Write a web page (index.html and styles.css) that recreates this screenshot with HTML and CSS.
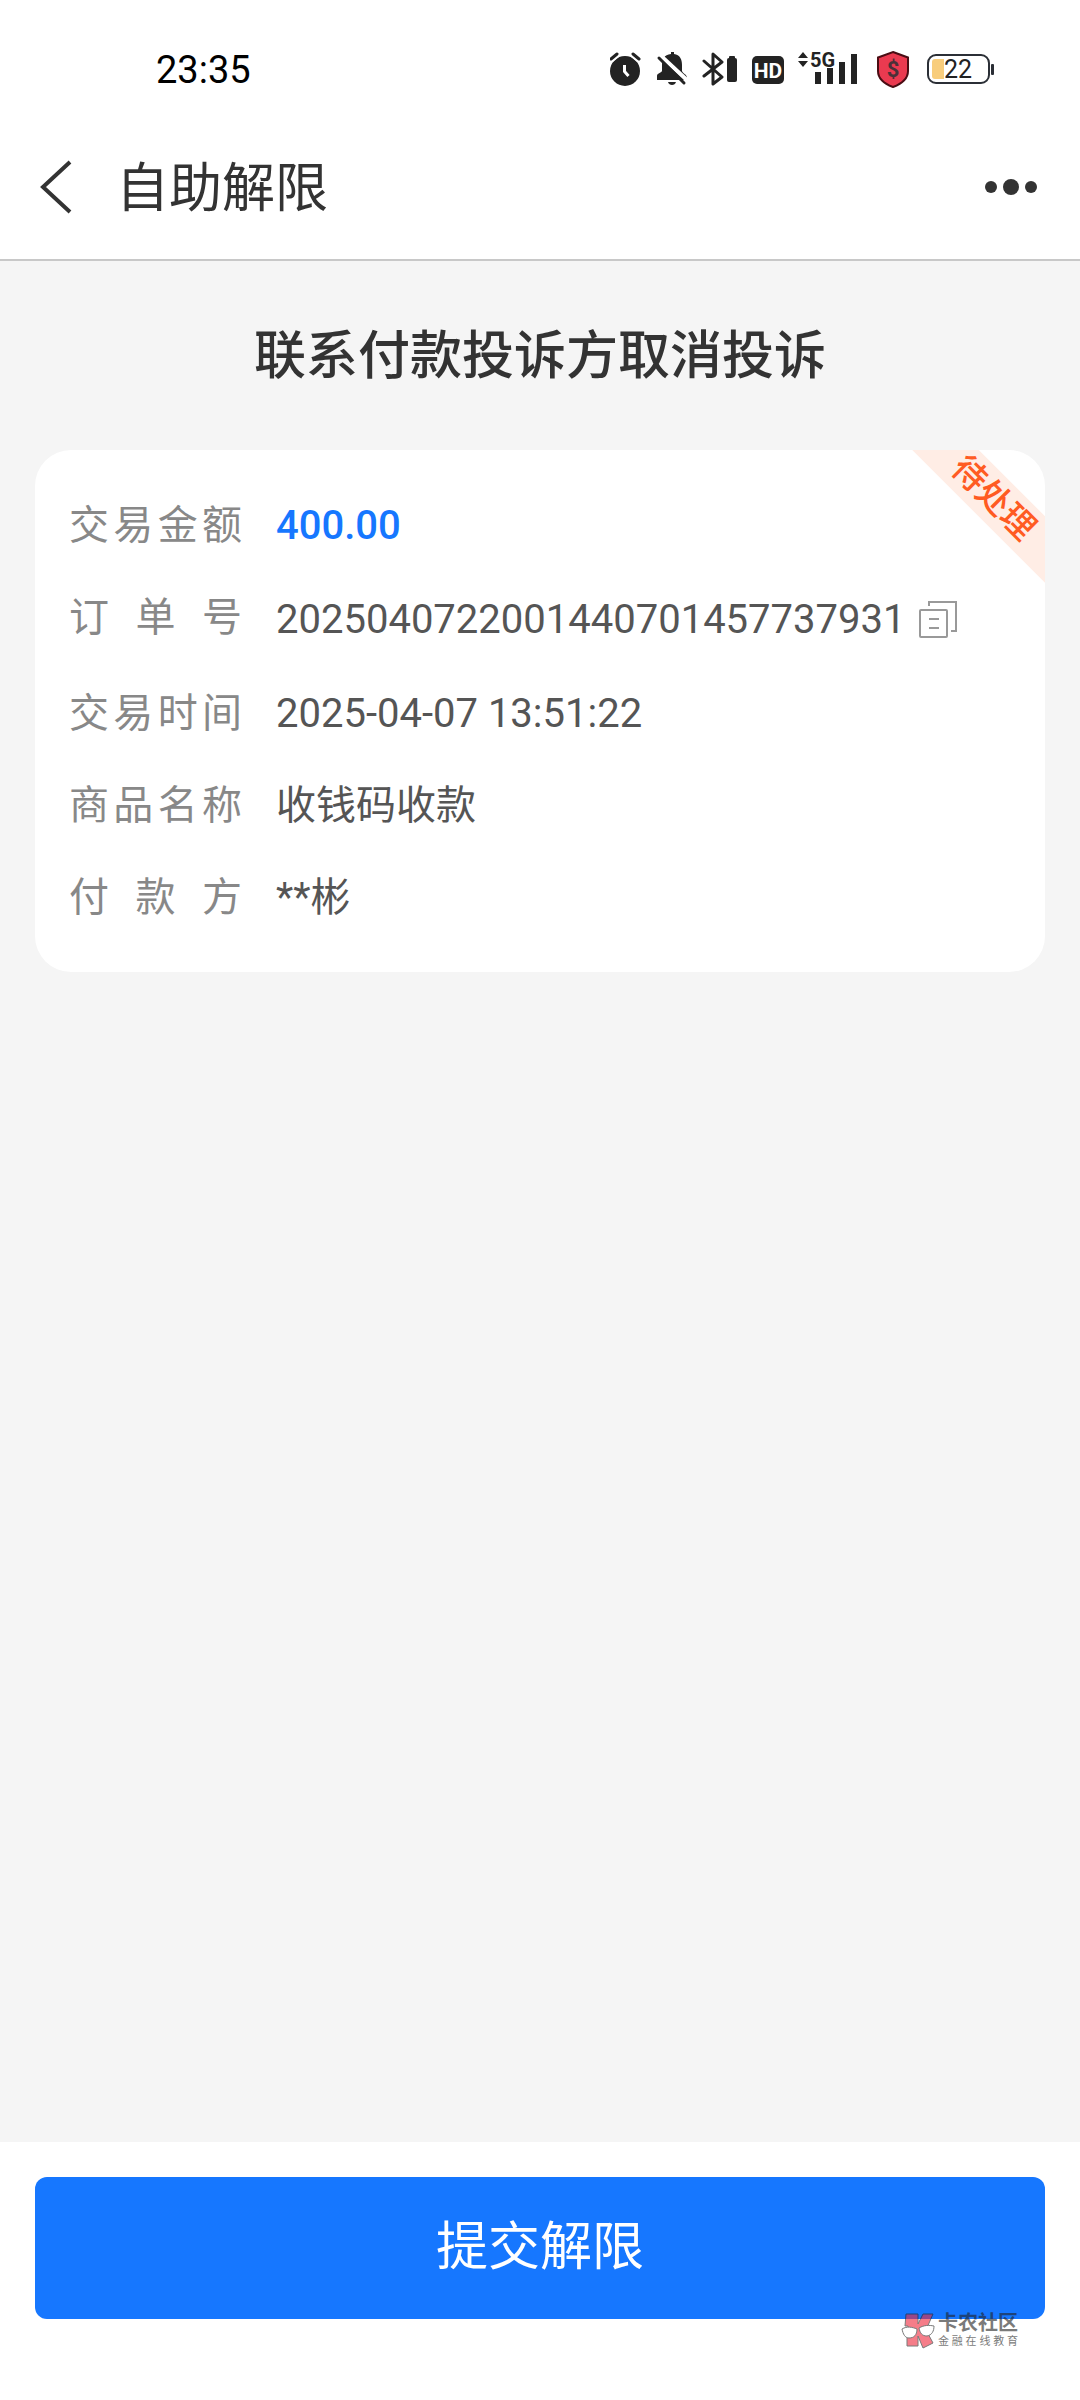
FILE: index.html
```
<!doctype html>
<html lang="zh-CN">
<head>
 <meta charset="UTF-8">
 <meta name="viewport" content="width=device-width, initial-scale=1.0">
 <title>自助解限</title>
 <link rel="stylesheet" href="styles.css">
</head>
<body>
<div class="status">
 <span class="time">23:35</span>
 <div class="icons">
  <!-- 闹钟 -->
  <svg width="32" height="40" viewBox="0 0 32 40">
   <circle cx="15" cy="21" r="15" fill="#232323"/>
   <path d="M1 9L7 4M29 9L23 4" stroke="#fff" stroke-width="7"/>
   <path d="M1 9L7 4M29 9L23 4" stroke="#232323" stroke-width="3" stroke-linecap="round"/>
   <path d="M14.500 15V21.500L18.500 26" fill="none" stroke="#fff" stroke-width="3"/>
  </svg>
  <!-- 静音 -->
  <svg width="32" height="40" viewBox="0 0 32 40">
   <path d="M15 2h3v2c6 1 8 5 8 11v6c1 3 5 3 5 7v2H1v-4c0-3 4-3 5-5v-6C6 9 8 5 15 4z" fill="#232323"/>
   <path d="M12 32h8c-1 4-7 4-8 0z" fill="#232323"/>
   <path d="M4.500 5.500L32 31" stroke="#fff" stroke-width="4"/>
   <path d="M3 8L28 33" stroke="#232323" stroke-width="3" stroke-linecap="round"/>
  </svg>
  <!-- 蓝牙 -->
  <svg width="36" height="40" viewBox="0 0 36 40">
   <path d="M2 11L20 27L11 34V4L20 12L2 26" fill="none" stroke="#232323" stroke-width="3" stroke-linejoin="round" stroke-linecap="round"/>
   <rect x="25" y="8" width="10" height="24" rx="2" fill="#232323"/>
   <rect x="27" y="6" width="6" height="3" rx="1" fill="#232323"/>
  </svg>
  <!-- HD -->
  <svg width="32" height="40" viewBox="0 0 32 40">
   <rect x="0" y="6" width="32" height="28" rx="5" fill="#232323"/>
   <text x="16" y="28" class="hd">HD</text>
  </svg>
  <!-- 5G 信号 -->
  <svg width="62" height="40" viewBox="0 0 62 40">
   <path d="M0 8L5 2L10 8zM0 11H10L5 17z" fill="#232323"/>
   <path d="M20 34V22M32 34V18M44 34V12M56 34V4" stroke="#232323" stroke-width="6"/>
   <text x="12" y="17" class="net">5G</text>
  </svg>
  <!-- 安全盾牌 -->
  <svg width="38" height="40" viewBox="-2 0 38 40">
   <path d="M17 2L32 7.500V21C32 29 25 34 17 37C9 34 2 29 2 21V7.500z" fill="#ea3a50" stroke="#4a0d14" stroke-width="2"/>
   <text x="17" y="27" class="dollar">$</text>
  </svg>
  <!-- 电池 -->
  <svg width="68" height="40" viewBox="0 0 68 40">
   <rect x="2" y="5" width="61" height="28" rx="8" fill="none" stroke="#2b2f36" stroke-width="2"/>
   <path d="M9 9H18V29H9a3 3 0 0 1-3-3V12a3 3 0 0 1 3-3z" fill="#f8cd7c"/>
   <rect x="65" y="14" width="3" height="11" rx="1" fill="#2b2f36"/>
   <text x="32" y="28" class="power">22</text>
  </svg>
 </div>
</div>

<header class="nav">
 <button class="back" type="button" aria-label="返回">
  <svg width="32" height="54" viewBox="0 0 32 54"><path d="M30 2L3 27L30 52" fill="none" stroke="#333" stroke-width="4"/></svg>
 </button>
 <h1>自助解限</h1>
 <button class="more" type="button" aria-label="更多">
  <svg width="54" height="18" viewBox="0 0 54 18" fill="#333"><circle cx="7" cy="9" r="6"/><circle cx="27" cy="9" r="8"/><circle cx="47" cy="9" r="6"/></svg>
 </button>
</header>

<main class="main">
 <h2>联系付款投诉方取消投诉</h2>
 <section class="card">
  <span class="ribbon">待处理</span>
  <dl>
   <div class="row"><dt>交易金额</dt><dd class="money">400.00</dd></div>
   <div class="row order">
    <dt>订单号</dt>
    <dd>2025040722001440701457737931
     <button class="copy" type="button" aria-label="复制">
      <svg width="38" height="38" viewBox="0 0 38 38" fill="none" stroke="#999" stroke-width="2">
       <rect x="1" y="9" width="27" height="27" rx="1"/>
       <path d="M10 5V1H37V30H32M10 18H20M10 27H20"/>
      </svg>
     </button>
    </dd>
   </div>
   <div class="row"><dt>交易时间</dt><dd>2025-04-07 13:51:22</dd></div>
   <div class="row"><dt>商品名称</dt><dd>收钱码收款</dd></div>
   <div class="row"><dt>付款方</dt><dd>**彬</dd></div>
  </dl>
 </section>
</main>

<footer class="footer">
 <button class="submit" type="button">提交解限</button>
 <div class="mark">
  <svg width="34" height="36" viewBox="0 0 34 36">
   <path d="M5 1H17V11L22 1H32L25 17L32 30L22 35L17 23V33H6V24H7V13H4z" fill="#f0283c" stroke="#222" stroke-width="1"/>
   <path d="M1 16C6 13 11 14 16 16C16 22 13 25 8 25C4 25 2 21 1 16zM18 15C23 12 28 12 33 13C33 18 31 22 26 23C21 23 19 20 18 15z" fill="#fff" stroke="#222" stroke-width="1"/>
  </svg>
  <div class="mark-text">
   <strong>卡农社区</strong>
   <small>金融在线教育</small>
  </div>
 </div>
</footer>
</body>
</html>
```
FILE: styles.css
```
*{
 margin:0;
 padding:0;
 box-sizing: border-box;
}
body{
 display: flex;
 flex-direction: column;
 min-height: 100vh;
 background-color: #fff;
 color: #333;
 font-family: Roboto, "Noto Sans CJK SC", sans-serif;
}
button{
 border: 0;
 background: none;
 font-family: inherit;
 cursor: pointer;
}
svg{
 display: block;
}
/* 状态栏 */
.status{
 display: flex;
 justify-content: space-between;
 align-items: center;
 height: 114px;
 padding: 26px 86px 0 156px;
}
.time{
 color: #000;
 font-size: 38px;
}
.icons{
 display: flex;
 align-items: center;
 gap: 14px;
}
.icons text{
 font-family: Roboto, sans-serif;
}
.icons .hd{
 fill: #fff;
 font-size: 21px;
 font-weight: 700;
 text-anchor: middle;
}
.icons .net{
 fill: #232323;
 stroke: #fff;
 stroke-width: 2px;
 paint-order: stroke;
 font-size: 20px;
 font-weight: 700;
}
.icons .dollar{
 fill: #4b3038;
 font-size: 22px;
 font-weight: 700;
 text-anchor: middle;
}
.icons .power{
 fill: #222;
 font-size: 25px;
 text-anchor: middle;
}
/* 标题栏 */
.nav{
 display: flex;
 align-items: center;
 height: 147px;
 padding: 0 42px 0 40px;
 border-bottom: 2px solid #c8c8c8;
}
.nav h1{
 flex: 1;
 margin-left: 44px;
 padding-bottom: 6px;
 font-size: 53px;
 font-weight: 400;
}
.main{
 flex: 1;
 padding: 0 35px;
 background-color: #f5f5f5;
}
.main h2{
 padding: 58px 0 55px;
 font-size: 52px;
 font-weight: 500;
 line-height: 76px;
 text-align: center;
}
.card{
 position: relative;
 overflow: hidden;
 padding: 30px 34px 28px;
 border-radius: 36px;
 background-color: #fff;
}
.row{
 display: flex;
 font-size: 40px;
 line-height: 92px;
}
.row dt{
 width: 173px;
 margin-right: 34px;
 color: #888;
 text-align-last: justify;
}
.row dd{
 color: #555;
}
.row .money{
 color: #1677ff;
 font-weight: 500;
}
.order dd{
 display: flex;
 align-items: center;
 gap: 14px;
 line-height: 96px;
}
.ribbon{
 position: absolute;
 top: 26px;
 right: -60px;
 width: 220px;
 padding-right: 4px;
 transform: rotate(45deg);
 background-color: #ffede5;
 color: #ff5b22;
 font-size: 34px;
 font-weight: 500;
 line-height: 47px;
 text-align: center;
}
/* 底部 */
.footer{
 position: relative;
 padding: 35px 35px 81px;
 background-color: #fff;
}
.submit{
 display: block;
 width: 100%;
 border-radius: 12px;
 background-color: #1677ff;
 color: #fff;
 font-size: 52px;
 line-height: 142px;
}
.mark{
 position: absolute;
 right: 62px;
 bottom: 50px;
 display: flex;
 align-items: center;
 gap: 3px;
 opacity: .6;
}
.mark-text{
 width: 80px;
 color: #222;
}
.mark-text strong,
.mark-text small{
 display: block;
 text-align-last: justify;
}
.mark-text strong{
 font-size: 20px;
 font-weight: 700;
 line-height: 22px;
}
.mark-text small{
 font-size: 11px;
 line-height: 16px;
}
```
